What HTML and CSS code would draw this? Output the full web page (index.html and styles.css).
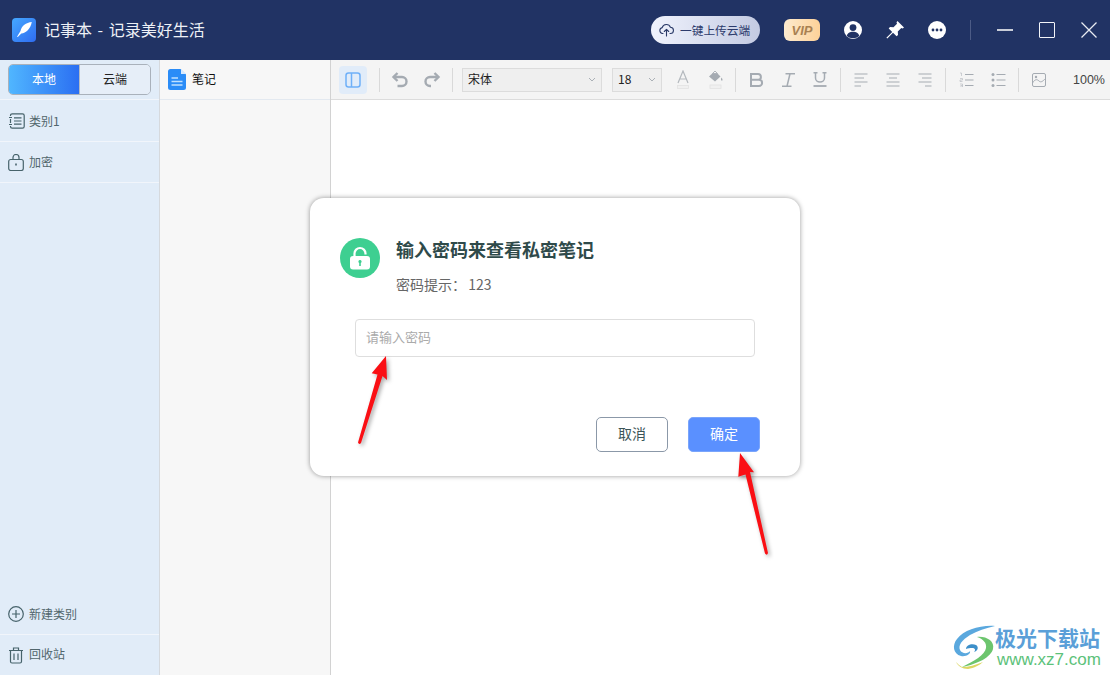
FILE: index.html
```html
<!DOCTYPE html>
<html lang="zh-CN">
<head>
<meta charset="utf-8">
<title>记事本</title>
<link rel="stylesheet" href="styles.css">
</head>
<body>
<div class="app">
  <header class="titlebar">
    <span class="logo">
      <svg width="24" height="24" viewBox="0 0 24 24"><path d="M19.800 4 C14 4.500 9.500 8 8.500 13 L5 18.700 L5.800 19.100 L9.300 15.500 C14 15 18.500 11 19.800 4 Z" fill="#fff"/></svg>
    </span>
    <span class="app-title">记事本 - 记录美好生活</span>
    <span class="upload">
      <svg width="15" height="14" viewBox="0 0 15 14" fill="none" stroke="#2a3a68" stroke-width="1.100" stroke-linecap="round" stroke-linejoin="round"><path d="M4 10.500 H3.500 A3 3 0 0 1 3.200 4.600 A4.300 4.300 0 0 1 11.400 4.300 A3.100 3.100 0 0 1 11.300 10.500 H11"/><path d="M7.500 13 V6.500 M5.300 8.500 L7.500 6.300 L9.700 8.500"/></svg>
      <span class="upload-text">一键上传云端</span>
    </span>
    <span class="vip">VIP</span>
    <svg class="tb-user" width="22" height="22" viewBox="0 0 22 22"><circle cx="11" cy="11" r="9" fill="#fff"/><circle cx="11" cy="8.600" r="3.400" fill="#213364"/><path d="M4.800 17 C5.500 13.800 8 12.800 11 12.800 C14 12.800 16.500 13.800 17.200 17 C15.500 18.500 13.500 19.200 11 19.200 C8.500 19.200 6.500 18.500 4.800 17 Z" fill="#213364"/></svg>
    <svg class="tb-pin" width="22" height="22" viewBox="0 0 22 22"><path d="M13.500 2 L20 8.500 L18.700 9.500 L17.300 9 L13.800 12.500 L14 16 L12.600 17.300 L9 13.700 L3.300 19.600 L2.400 18.700 L8.200 13 L4.700 9.400 L6 8 L9.500 8.200 L13 4.700 L12.500 3.300 Z" fill="#fff"/></svg>
    <svg class="tb-more" width="22" height="22" viewBox="0 0 22 22"><circle cx="11" cy="11" r="9" fill="#fff"/><circle cx="7" cy="11" r="1.400" fill="#213364"/><circle cx="11" cy="11" r="1.400" fill="#213364"/><circle cx="15" cy="11" r="1.400" fill="#213364"/></svg>
    <span class="tb-sep"></span>
    <span class="win-min"></span>
    <span class="win-max"></span>
    <svg class="win-close" width="16" height="16" viewBox="0 0 16 16" stroke="#e8ebf2" stroke-width="1.300" fill="none"><path d="M0.500 0.500 L15.500 15.500 M15.500 0.500 L0.500 15.500"/></svg>
  </header>

  <div class="main">
    <aside class="sidebar">
      <div class="toggle-row">
        <div class="toggle">
          <span class="toggle-on">本地</span>
          <span class="toggle-off">云端</span>
        </div>
      </div>
      <div class="side-item side-first">
        <svg width="16" height="16" viewBox="0 0 16 16" fill="none" stroke="#47636b" stroke-width="1.200"><path d="M1.500 3 V2.500 A1.700 1.700 0 0 1 3.200 0.800 H13.500 A1.700 1.700 0 0 1 15.200 2.500 V13.500 A1.700 1.700 0 0 1 13.500 15.200 H3.200 A1.700 1.700 0 0 1 1.500 13.500 V13 M1.500 6 V10"/><path d="M0 4.500 H3 M0 11.500 H3 M5 4.800 H12.500 M5 8 H12.500 M5 11.200 H12.500"/></svg>
        <span>类别1</span>
      </div>
      <div class="side-item side-lock">
        <svg width="16" height="17" viewBox="0 0 16 17" fill="none" stroke="#47636b" stroke-width="1.200"><rect x="0.700" y="5.500" width="14.600" height="11" rx="2"/><path d="M5 5.500 V3.500 A3 3 0 0 1 11 3.500 V5.500"/><path d="M8 9.500 V11.500" stroke-width="1.600"/></svg>
        <span>加密</span>
      </div>
      <div class="side-spacer"></div>
      <div class="side-item side-new">
        <svg width="16" height="16" viewBox="0 0 16 16" fill="none" stroke="#47636b" stroke-width="1.200"><circle cx="8" cy="8" r="7.300"/><path d="M8 4 V12 M4 8 H12"/></svg>
        <span>新建类别</span>
      </div>
      <div class="side-item side-trash">
        <svg width="16" height="17" viewBox="0 0 16 17" fill="none" stroke="#47636b" stroke-width="1.200"><path d="M1 3.500 H15 M5.500 3.500 V1 H10.500 V3.500 M2.500 3.500 V14.500 A1.500 1.500 0 0 0 4 16 H12 A1.500 1.500 0 0 0 13.500 14.500 V3.500 M6 6.500 V13 M10 6.500 V13"/></svg>
        <span>回收站</span>
      </div>
    </aside>

    <section class="notes">
      <div class="note-head">
        <svg width="18" height="21" viewBox="0 0 18 21"><path d="M2.500 0 H12.500 L18 5.500 V18.500 A2.500 2.500 0 0 1 15.500 21 H2.500 A2.500 2.500 0 0 1 0 18.500 V2.500 A2.500 2.500 0 0 1 2.500 0 Z" fill="#2a8cf7"/><path d="M13 0.300 L17.800 5 H13 Z" fill="#d7eaff"/><path d="M3.500 9 H10 M3.500 12.500 H14.500 M3.500 16 H14.500" stroke="#bfe0ff" stroke-width="1.300"/></svg>
        <span>笔记</span>
      </div>
    </section>

    <section class="editor">
      <div class="toolbar">
        <span class="panel-btn">
          <svg width="16" height="16" viewBox="0 0 16 16" fill="none" stroke="#6fb0f8" stroke-width="1.500"><rect x="1" y="1" width="14" height="14" rx="2.500"/><path d="M6.500 1 V15"/></svg>
        </span>
        <span class="sep sep-first"></span>
        <span class="tool">
          <svg width="18" height="18" viewBox="0 0 18 18" fill="none" stroke="#a5abb2" stroke-width="2.400"><path d="M6.500 2 L2.500 6 L6.500 10"/><path d="M3 6 H11 A4.500 4.500 0 0 1 11 15 H6.500"/></svg>
        </span>
        <span class="tool">
          <svg width="18" height="18" viewBox="0 0 18 18" fill="none" stroke="#a5abb2" stroke-width="2.400"><path d="M11.500 2 L15.500 6 L11.500 10"/><path d="M15 6 H7 A4.500 4.500 0 0 0 7 15 H8"/></svg>
        </span>
        <span class="sep sep-before-select"></span>
        <div class="select select-font"><span>宋体</span><svg width="8" height="5" viewBox="0 0 8 5" fill="none" stroke="#aab0b6"><path d="M1 1 L4 4 L7 1"/></svg></div>
        <div class="select select-size"><span>18</span><svg width="8" height="5" viewBox="0 0 8 5" fill="none" stroke="#aab0b6"><path d="M1 1 L4 4 L7 1"/></svg></div>
        <span class="tool tool-after-select">
          <svg width="14" height="19" viewBox="0 0 14 19" fill="none"><path d="M2 13 L7 1 L12 13 M3.800 9 H10.200" stroke="#b3b8bd" stroke-width="1.200"/><rect x="1.500" y="15.500" width="11" height="3" fill="#f0f0f0" stroke="#e2e2e2" stroke-width="0.800"/></svg>
        </span>
        <span class="tool">
          <svg width="15" height="19" viewBox="0 0 15 19"><path d="M7 1 L12.500 6.500 L7 11.500 L1 6.500 Z" fill="#a5abb2"/><path d="M7 1 L9.500 3.500 H4.500 Z" fill="#f4f4f4" stroke="#a5abb2" stroke-width="0.800"/><path d="M13.500 7.500 C14.500 9 15 10 14 10.800 C13 10.800 12.500 9 13.500 7.500 Z" fill="#a5abb2"/><rect x="2" y="15" width="11" height="3.500" fill="#f0f0f0" stroke="#e2e2e2" stroke-width="0.800"/></svg>
        </span>
        <span class="sep"></span>
        <span class="tool">
          <svg width="15" height="14" viewBox="0 0 15 14" fill="none" stroke="#a5abb2" stroke-width="2"><path d="M1 1 H9 A2.800 2.800 0 0 1 9 6.800 H2 M9 6.800 H10 A3.100 3.100 0 0 1 10 13 H1 M2 1 V13"/></svg>
        </span>
        <span class="tool">
          <svg width="13" height="14" viewBox="0 0 13 14" fill="none" stroke="#a5abb2" stroke-width="1.500"><path d="M3.500 0.800 H13 M0 13.200 H9.500 M8 0.800 L5 13.200"/></svg>
        </span>
        <span class="tool">
          <svg width="14" height="15" viewBox="0 0 14 15" fill="none" stroke="#a5abb2" stroke-width="1.500"><path d="M2.500 0 V6 A4.500 4 0 0 0 11.500 6 V0 M0.500 0.800 H4.500 M9.500 0.800 H13.500"/><path d="M0.500 14 H13.500" stroke-width="1.800"/></svg>
        </span>
        <span class="sep"></span>
        <span class="tool">
          <svg width="14" height="14" viewBox="0 0 14 14" stroke="#a5abb2" stroke-width="1.100"><path d="M0.500 1 H13.500 M0.500 5 H10 M0.500 9 H13.500 M0.500 13 H7"/></svg>
        </span>
        <span class="tool">
          <svg width="14" height="14" viewBox="0 0 14 14" stroke="#a5abb2" stroke-width="1.100"><path d="M0.500 1 H13.500 M3 5 H11 M0.500 9 H13.500 M0.500 13 H13.500"/></svg>
        </span>
        <span class="tool">
          <svg width="14" height="14" viewBox="0 0 14 14" stroke="#a5abb2" stroke-width="1.100"><path d="M0.500 1 H13.500 M4 5 H13.500 M0.500 9 H13.500 M7 13 H13.500"/></svg>
        </span>
        <span class="sep"></span>
        <span class="tool">
          <svg width="15" height="15" viewBox="0 0 15 15" fill="none" stroke="#a5abb2"><path d="M6 2.500 H14.500 M6 8 H14.500 M6 13.500 H14.500" stroke-width="1.100"/><path d="M1 1 H2.500 V4 M1 6.500 H3.500 V8 H1 V9.500 H3.500 M1 12 H3.500 V15 H1 M1.500 13.500 H3.500" stroke-width="0.500"/></svg>
        </span>
        <span class="tool">
          <svg width="15" height="15" viewBox="0 0 15 15"><path d="M5.500 2.500 H14.500 M5.500 8 H14.500 M5.500 13.500 H14.500" stroke="#a5abb2" stroke-width="1.100"/><circle cx="2" cy="2.500" r="1.500" fill="#a5abb2"/><circle cx="2" cy="8" r="1.500" fill="#a5abb2"/><circle cx="2" cy="13.500" r="1.500" fill="#a5abb2"/></svg>
        </span>
        <span class="sep"></span>
        <span class="tool">
          <svg width="14" height="14" viewBox="0 0 14 14" fill="none" stroke="#a5abb2"><rect x="0.500" y="0.500" width="13" height="13" rx="1.500"/><path d="M0.500 10 C3 6 5 6 7 8 C9 10 11 8 13.500 5.500"/><circle cx="4" cy="4" r="1.200" fill="#a5abb2" stroke="none"/></svg>
        </span>
        <span class="zoom-level">100%</span>
      </div>
      <div class="page"></div>
    </section>
  </div>

  <div class="dialog">
    <div class="dialog-head">
      <span class="lock-badge">
        <svg width="22" height="24" viewBox="0 0 22 24"><path d="M5.500 11 V7.500 A5.500 5.500 0 0 1 16.500 7.500 V8.500" fill="none" stroke="#fff" stroke-width="2.200"/><rect x="1" y="10" width="20" height="13.500" rx="3" fill="#fff"/><path d="M11 14 A1.600 1.600 0 0 1 11.800 17 V20 H10.200 V17 A1.600 1.600 0 0 1 11 14 Z" fill="#3ecf91"/></svg>
      </span>
      <div class="dialog-text">
        <h2 class="dialog-title">输入密码来查看私密笔记</h2>
        <p class="dialog-hint">密码提示： 123</p>
      </div>
    </div>
    <input class="dialog-input" type="password" placeholder="请输入密码">
    <div class="dialog-actions">
      <button class="btn btn-cancel" type="button">取消</button>
      <button class="btn btn-ok" type="button">确定</button>
    </div>
  </div>

  <svg class="arrow arrow-left" width="32" height="90" viewBox="0 0 32 90"><path d="M28 0 L29 24 L24.500 20 L3 87 Q1 89 0 86.500 L19.500 18.500 L13.700 17.300 Z" fill="#fa0f14"/></svg>
  <svg class="arrow arrow-right" width="32" height="105" viewBox="0 0 32 105"><path d="M2 1 L16 20.300 L12 20 L30 101 Q29 104 27 101.500 L7.500 22.500 L0.300 24.700 Z" fill="#fa0f14"/></svg>

  <div class="watermark">
    <svg width="45" height="48" viewBox="0 0 45 48">
      <path d="M45 2 C30 1 14 6 7 15 C2 21 3 30 11 32 C16 33 21 30 20 27 C18 30 12 30 10 26 C8 21 12 16 20 11 C27 7 36 4 45 2 Z" fill="#5aa8de"/>
      <path d="M16 25 C16 21 22 19 26 21 C29 23 28 27 24 28 C26 26 25 24 22 24 C20 24 18 24 16 25 Z" fill="#3d8fc9"/>
      <path d="M27 13 C36 12 45 17 43 25 C41 33 28 40 12 43 C24 37 35 31 36 24 C37 19 33 15 27 13 Z" fill="#6cc56e"/>
      <path d="M6 38 C8 42 12 45 18 45 C24 44 30 41 33 38 C26 41 18 43 12 43 C10 42 8 40 6 38 Z" fill="#dcd662"/>
    </svg>
    <div class="wm-text">
      <span class="wm-cn">极光下载站</span>
      <span class="wm-url">www.xz7.com</span>
    </div>
  </div>
</div>
</body>
</html>
```
FILE: styles.css
```css
* { box-sizing: border-box; }
html, body { margin: 0; padding: 0; }
body {
  width: 1110px;
  height: 675px;
  overflow: hidden;
  font-family: "Noto Sans CJK SC", "Noto Sans", sans-serif;
  font-size: 12px;
  color: #333;
}
.app {
  position: relative;
  width: 1110px;
  height: 675px;
  display: flex;
  flex-direction: column;
  background: #fff;
}

/* title bar */
.titlebar {
  height: 60px;
  flex: none;
  display: flex;
  align-items: center;
  padding: 0 13px 0 12px;
  background: #213364;
}
.logo {
  width: 24px;
  height: 24px;
  border-radius: 4px;
  background: linear-gradient(135deg, #45a8ff, #2f6cf0);
  display: flex;
}
.app-title {
  margin: 0 0 2px 8px;
  font-size: 16px;
  word-spacing: 2px;
  color: #eef1f6;
  white-space: nowrap;
}
.upload {
  margin-left: auto;
  width: 109px;
  height: 28px;
  border-radius: 14px;
  padding-left: 8px;
  display: flex;
  align-items: center;
  gap: 6px;
  background: linear-gradient(90deg, #f0f3fd, #c3cae2);
  color: #2d3b6c;
  white-space: nowrap;
}
.upload-text { font-size: 11.7px; margin-bottom: 2px; }
.vip {
  margin-left: 24px;
  width: 36px;
  height: 22px;
  border-radius: 6px;
  background: linear-gradient(90deg, #fdebcf, #fdd198);
  color: #a98152;
  font: italic bold 13px "Liberation Sans", sans-serif;
  display: flex;
  align-items: center;
  justify-content: center;
}
.tb-user { margin-left: 22px; }
.tb-pin, .tb-more { margin-left: 20px; }
.tb-sep {
  margin-left: 22px;
  width: 1px;
  height: 20px;
  background: #4c5b86;
}
.win-min {
  margin-left: 26px;
  width: 16px;
  height: 2px;
  background: #c9cdd8;
}
.win-max {
  margin-left: 26px;
  width: 16px;
  height: 16px;
  border: 1px solid #f2f4f8;
  border-radius: 1px;
}
.win-close { margin-left: 26px; }

/* main columns */
.main {
  flex: 1;
  min-height: 0;
  display: flex;
}
.sidebar {
  width: 160px;
  flex: none;
  display: flex;
  flex-direction: column;
  background: #e1ecf8;
  border-right: 1px solid #d6d9dd;
}
.toggle-row {
  height: 40px;
  padding: 4px 8px 0;
  border-bottom: 1px solid #f1f5fb;
}
.toggle {
  width: 143px;
  height: 31px;
  display: flex;
  border: 1px solid #a9b1bb;
  border-radius: 5px;
  overflow: hidden;
}
.toggle-on, .toggle-off {
  display: flex;
  align-items: center;
  justify-content: center;
  padding-bottom: 2px;
}
.toggle-on {
  width: 70px;
  color: #fff;
  background: linear-gradient(90deg, #50b6ff, #2b6ff2);
}
.toggle-off {
  flex: 1;
  color: #222;
  border-left: 1px solid #b5bcc6;
  background: #e6eef8;
}
.side-item {
  height: 42px;
  padding-left: 9px;
  display: flex;
  align-items: center;
  gap: 4px;
  color: #51666c;
  border-bottom: 1px solid #f1f5fb;
}
.side-item span { margin-bottom: 2px; }
.side-first span { margin-bottom: 0; }
.side-lock { height: 41px; padding-left: 8px; gap: 5px; }
.side-spacer { flex: 1; }
.side-new { height: 41px; padding-left: 8px; gap: 5px; }
.side-trash { height: 40px; padding-left: 8px; gap: 5px; border-bottom: 0; }
.side-trash span { margin-bottom: 3px; }

.notes {
  width: 171px;
  flex: none;
  background: #f7f7f7;
  border-right: 1px solid #d2d2d2;
}
.note-head {
  height: 40px;
  padding-left: 8px;
  display: flex;
  align-items: center;
  gap: 6px;
  color: #111;
  border-bottom: 1px solid #e3e9f0;
}
.note-head span { margin-bottom: 2px; }

/* editor */
.editor {
  flex: 1;
  min-width: 0;
  display: flex;
  flex-direction: column;
}
.toolbar {
  height: 40px;
  flex: none;
  display: flex;
  align-items: center;
  padding-left: 8px;
  background: #f4f4f4;
  border-bottom: 1px solid #dcdcdc;
}
.panel-btn {
  width: 28px;
  height: 28px;
  border-radius: 4px;
  background: #e1ecf9;
  display: flex;
  align-items: center;
  justify-content: center;
}
.sep {
  width: 1px;
  height: 24px;
  margin: 0 4px;
  background: #d9d9d9;
}
.sep-first { margin-left: 12px; }
.sep-before-select { margin-right: 9px; }
.tool {
  width: 32px;
  height: 24px;
  flex: none;
  display: flex;
  align-items: center;
  justify-content: center;
}
.tool-after-select { margin-left: 5px; }
.select {
  height: 24px;
  padding: 0 5px;
  display: flex;
  align-items: center;
  justify-content: space-between;
  border: 1px solid #dcdcdc;
  background: #efefef;
  color: #222;
}
.select span { margin-bottom: 3px; }
.select-font { width: 140px; margin-right: 10px; }
.select-size { width: 50px; }
.zoom-level {
  margin-left: 18px;
  color: #444;
  font: 12.5px "Liberation Sans", sans-serif;
}
.page { flex: 1; background: #fff; }

/* dialog */
.dialog {
  position: absolute;
  left: 310px;
  top: 198px;
  width: 490px;
  height: 278px;
  padding: 40px 40px 0 30px;
  background: #fff;
  border-radius: 14px;
  box-shadow: 0 0 5px rgba(0, 0, 0, .4);
}
.dialog-head {
  display: flex;
  gap: 16px;
}
.lock-badge {
  width: 40px;
  height: 40px;
  flex: none;
  border-radius: 50%;
  background: #3ecf91;
  display: flex;
  align-items: center;
  justify-content: center;
}
.dialog-title {
  margin: 0;
  font-size: 18px;
  line-height: 22px;
  font-weight: 700;
  color: #2f4a4a;
}
.dialog-hint {
  margin: 12px 0 0;
  font-size: 14px;
  line-height: 24px;
  word-spacing: -1px;
  color: #666;
}
.dialog-input {
  display: block;
  width: 400px;
  height: 38px;
  margin: 23px 0 0 15px;
  padding: 0 10px 3px;
  border: 1px solid #dedede;
  border-radius: 4px;
  outline: 0;
  background: #fff;
  font: 13px "Noto Sans CJK SC", sans-serif;
}
.dialog-input::placeholder { color: #aaa; opacity: 1; }
.dialog-actions {
  margin-top: 60px;
  display: flex;
  justify-content: flex-end;
  gap: 20px;
}
.btn {
  width: 72px;
  height: 35px;
  padding: 0 0 3px;
  border-radius: 5px;
  font: 14px "Noto Sans CJK SC", sans-serif;
}
.btn-cancel {
  background: #fff;
  border: 1px solid #8b98a8;
  color: #3c5557;
}
.btn-ok {
  background: #5a90ff;
  border: 1px solid #7aa5fb;
  color: #fff;
}

/* annotations */
.arrow {
  position: absolute;
  filter: drop-shadow(2px 2px 2px rgba(0, 0, 0, .35));
}
.arrow-left { left: 358px; top: 356px; }
.arrow-right { left: 738px; top: 452px; }

.watermark {
  position: absolute;
  left: 950px;
  top: 624px;
  display: flex;
  align-items: flex-start;
}
.wm-text {
  display: flex;
  flex-direction: column;
  align-items: flex-start;
}
.wm-cn {
  font-size: 21px;
  line-height: 26px;
  font-weight: 700;
  color: #5a9fd8;
  white-space: nowrap;
}
.wm-url {
  margin: 0 0 0 2px;
  font: 17px/20px "Liberation Sans", sans-serif;
  color: #5cc27a;
  white-space: nowrap;
}
```
